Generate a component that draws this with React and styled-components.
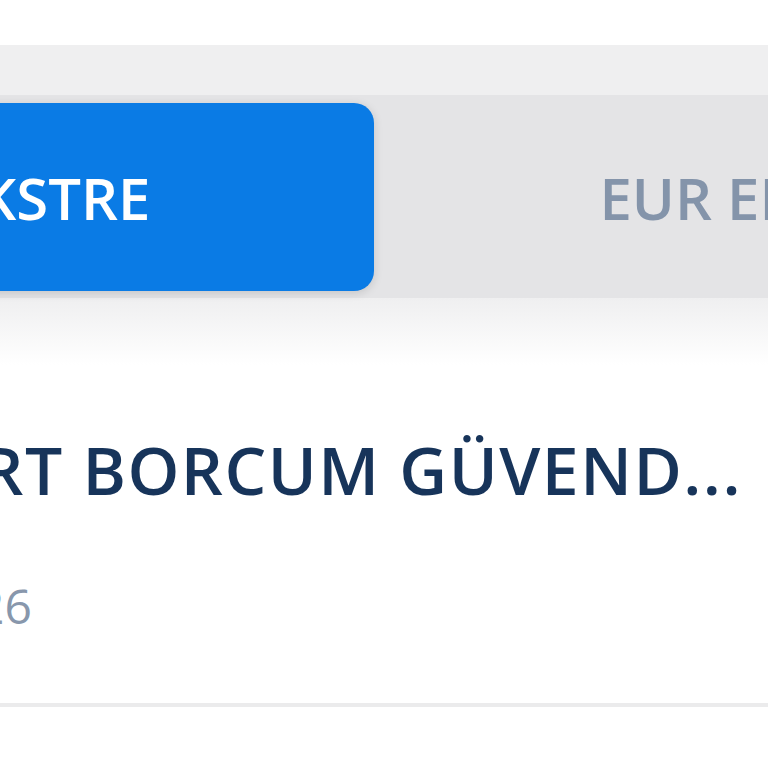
import styled, { createGlobalStyle } from "styled-components";

const GlobalStyle = createGlobalStyle`
  html, body {
    margin: 0;
    padding: 0;
    background: #ffffff;
    overflow: hidden;
  }
  body {
    font-family: "Open Sans", "Noto Sans", sans-serif;
  }
`;

const Page = styled.div`
  width: 768px;
  height: 768px;
  overflow: hidden;
  background: #ffffff;
  padding-top: 45px;
  box-sizing: border-box;
`;

const Segment = styled.div`
  background: linear-gradient(#efeff0 0, #efeff0 253px, #ffffff 320px);
  padding-top: 50px;
  padding-bottom: 67px;
`;

const TabBar = styled.div`
  display: flex;
  gap: 8px;
  padding: 8px 0 7px;
  margin-left: -392px;
  width: 1600px;
  background: #e4e4e6;
`;

const Tab = styled.div`
  flex: 0 0 766px;
  height: 188px;
  display: flex;
  align-items: center;
  justify-content: center;
  border-radius: 20px;
  font-size: 58px;
  font-weight: 600;
  padding-left: ${(p) => (p.$active ? "36px" : "0")};
  box-sizing: border-box;
  color: ${(p) => (p.$active ? "#ffffff" : "#8494aa")};
  background: ${(p) => (p.$active ? "#0a7be5" : "transparent")};
  box-shadow: ${(p) => (p.$active ? "0 2px 10px rgba(0, 0, 0, 0.14)" : "none")};
`;

const Item = styled.div`
  display: flex;
  flex-direction: column;
  gap: 67px;
  padding: 64px 0 67px;
  border-bottom: 4px solid #ebebec;
`;

const TitleRow = styled.div`
  display: flex;
  justify-content: flex-end;
  padding-right: 26px;
`;

const Title = styled.div`
  flex-shrink: 0;
  white-space: nowrap;
  font-size: 66px;
  font-weight: 600;
  letter-spacing: 1.5px;
  line-height: 80px;
  color: #17345a;
`;

const DateRow = styled.div`
  display: flex;
  justify-content: flex-end;
  width: 32px;
`;

const DateText = styled.div`
  flex-shrink: 0;
  white-space: nowrap;
  font-size: 48px;
  line-height: 60px;
  color: #8897ac;
`;

export default function App() {
  return (
    <>
      <GlobalStyle />
      <Page>
        <Segment>
          <TabBar>
            <Tab $active>TL EKSTRE</Tab>
            <Tab>EUR EKSTRE</Tab>
          </TabBar>
        </Segment>
        <Item>
          <TitleRow>
            <Title>KART BORCUM GÜVEND...</Title>
          </TitleRow>
          <DateRow>
            <DateText>12.01.2026</DateText>
          </DateRow>
        </Item>
      </Page>
    </>
  );
}
